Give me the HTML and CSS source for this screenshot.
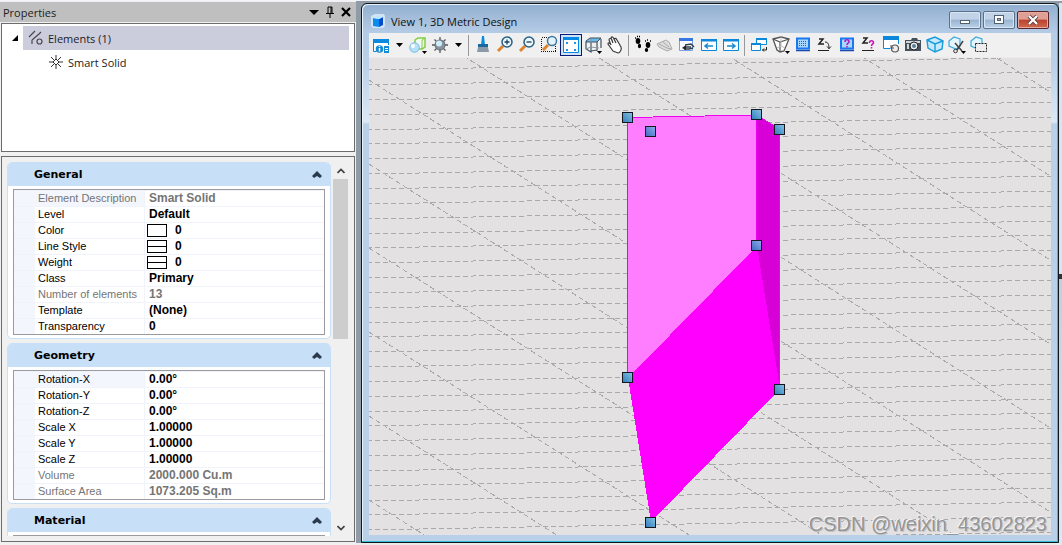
FILE: index.html
```html
<!DOCTYPE html>
<html lang="en">
<head>
<meta charset="utf-8">
<title>View 1, 3D Metric Design</title>
<link rel="stylesheet" href="styles.css">
</head>
<body>
<div class="app">
<aside class="panel">
  <header class="panel-head">
    <h1>Properties</h1>
    <button class="head-btn" aria-label="Options"><svg width="10" height="10" viewBox="0 0 10 10"><path d="M0 3h10L5 8z"/></svg></button>
    <button class="head-btn" aria-label="Pin"><svg width="8" height="12" viewBox="0 0 8 12"><path d="M2 7V1h4v6M5 1v6M0 7.500h8M4 8v4" fill="none" stroke="#000"/></svg></button>
    <button class="head-btn" aria-label="Close"><svg width="10" height="10" viewBox="0 0 10 10"><path d="M1 1l8 8M9 1L1 9" stroke="#000" stroke-width="2.200"/></svg></button>
  </header>
  <div class="tree">
    <div class="tree-row">
      <button class="twisty" aria-label="Collapse"><svg width="7" height="7" viewBox="0 0 7 7"><path d="M6 0v6H0z"/></svg></button>
      <div class="tree-item selected">
        <svg width="16" height="16" viewBox="0 0 16 16" fill="none" stroke="#484850" stroke-width="1.200"><path d="M1 7l6-6M4 14v-4M4 10l7-6M13 2l-2 2"/><circle cx="11.500" cy="11.500" r="2.500"/></svg>
        <span>Elements (1)</span>
      </div>
    </div>
    <div class="tree-row child">
      <svg width="16" height="16" viewBox="0 0 16 16" fill="none" stroke="#333"><path d="M8 5l3 3-3 3-3-3zM8 1v4M8 11v4M1 8h4M11 8h4M3 3l3 3M13 3l-3 3M3 13l3-3M13 13l-3-3"/></svg>
      <span>Smart Solid</span>
    </div>
  </div>
  <div class="props">
    <div class="cards">
      <section class="card">
        <button class="card-head"><span>General</span><svg width="12" height="8" viewBox="0 0 12 8"><path d="M1 5l5-5 5 5-2 2-3-2-3 2z" fill="#2b3a4c"/></svg></button>
        <div class="card-body">
          <table class="grid">
            <tr class="dim first"><th scope="row">Element Description</th><td>Smart Solid</td></tr>
            <tr><th scope="row">Level</th><td>Default</td></tr>
            <tr><th scope="row">Color</th><td><i class="swatch"></i>0</td></tr>
            <tr><th scope="row">Line Style</th><td><i class="swatch line"></i>0</td></tr>
            <tr><th scope="row">Weight</th><td><i class="swatch line"></i>0</td></tr>
            <tr><th scope="row">Class</th><td>Primary</td></tr>
            <tr class="dim"><th scope="row">Number of elements</th><td>13</td></tr>
            <tr><th scope="row">Template</th><td>(None)</td></tr>
            <tr><th scope="row">Transparency</th><td>0</td></tr>
          </table>
        </div>
      </section>
      <section class="card">
        <button class="card-head"><span>Geometry</span><svg width="12" height="8" viewBox="0 0 12 8"><path d="M1 5l5-5 5 5-2 2-3-2-3 2z" fill="#2b3a4c"/></svg></button>
        <div class="card-body">
          <table class="grid">
            <tr class="first"><th scope="row">Rotation-X</th><td>0.00°</td></tr>
            <tr><th scope="row">Rotation-Y</th><td>0.00°</td></tr>
            <tr><th scope="row">Rotation-Z</th><td>0.00°</td></tr>
            <tr><th scope="row">Scale X</th><td>1.00000</td></tr>
            <tr><th scope="row">Scale Y</th><td>1.00000</td></tr>
            <tr><th scope="row">Scale Z</th><td>1.00000</td></tr>
            <tr class="dim"><th scope="row">Volume</th><td>2000.000 Cu.m</td></tr>
            <tr class="dim"><th scope="row">Surface Area</th><td>1073.205 Sq.m</td></tr>
          </table>
        </div>
      </section>
      <section class="card">
        <button class="card-head"><span>Material</span><svg width="12" height="8" viewBox="0 0 12 8"><path d="M1 5l5-5 5 5-2 2-3-2-3 2z" fill="#2b3a4c"/></svg></button>
        <div class="card-body"><div class="grid empty"></div></div>
      </section>
    </div>
    <div class="scroll">
      <button aria-label="Scroll up"><svg width="8" height="6" viewBox="0 0 8 6"><path d="M0.500 5L4 1.500 7.500 5" fill="none" stroke="#404040" stroke-width="1.700"/></svg></button>
      <div class="track"><div class="thumb"></div></div>
      <button aria-label="Scroll down"><svg width="8" height="6" viewBox="0 0 8 6"><path d="M0.500 1L4 4.500 7.500 1" fill="none" stroke="#404040" stroke-width="1.700"/></svg></button>
    </div>
  </div>
</aside>

<main class="window">
  <header class="title">
    <svg width="16" height="16" viewBox="0 0 16 16"><path d="M1 3l4-2h9l1 2v10l-2 2H3l-2-2z" fill="#dceefb" opacity=".8"/><path d="M3 5l6 1v8l-6-1z" fill="#078cf0"/><path d="M9 6l4-2v8l-4 2z" fill="#044bc8"/><path d="M3 5l4-2 6 1-4 2z" fill="#bfe5ff"/></svg>
    <h2>View 1, 3D Metric Design</h2>
    <div class="win-btns">
      <button aria-label="Minimize"><svg width="12" height="10" viewBox="0 0 12 10"><rect x="1.500" y="5.500" width="9" height="3" fill="#fff" stroke="#52606f"/></svg></button>
      <button aria-label="Maximize"><svg width="12" height="10" viewBox="0 0 12 10"><rect x="1.500" y=".5" width="9" height="8" fill="#fff" stroke="#52606f"/><rect x="4.500" y="3.500" width="3" height="2" fill="#9db7d4" stroke="#52606f"/></svg></button>
      <button class="close" aria-label="Close view"><svg width="12" height="10" viewBox="0 0 12 10"><path d="M2 1l8 8M10 1L2 9" stroke="#5d4248" stroke-width="4"/><path d="M2 1l8 8M10 1L2 9" stroke="#fff" stroke-width="2.200"/></svg></button>
    </div>
  </header>
  <nav class="tools" aria-label="View tools">
    <button aria-label="View attributes"><svg viewBox="0 0 22 22"><path d="M3 5h16v13H3z" fill="#fff"/><path d="M3.500 8v9.500h3M18.500 8v3" fill="none" stroke="#0a84d8"/><path d="M3 5h16v4H3z" fill="#0a8ae0"/><circle cx="9.500" cy="15" r="3.800" fill="#128ad8"/><path d="M9.500 14v3.500M9.500 12v1" stroke="#fff" stroke-width="1.500"/><path d="M14 12h5v7h-5z" fill="#128ad8"/><path d="M15 14.500h3M15 16.500h3" stroke="#fff"/></svg></button>
    <button class="caret" aria-label="View attributes list"><svg viewBox="0 0 15 22"><path d="M4 9h7l-3.500 4z"/></svg></button>
    <button aria-label="Display style"><svg viewBox="0 0 22 22"><path d="M8 6l3-2h7v9l-3 2H8z" fill="#f3faf0" stroke="#82cd43" stroke-width="1.500"/><path d="M15 15V6l3-2" fill="none" stroke="#82cd43"/><circle cx="7.500" cy="13.500" r="4.800" fill="#b4e0fa" stroke="#77c0e6"/><circle cx="6" cy="12" r="2" fill="#fff"/><path d="M15 17h5l-2.500 3z"/></svg></button>
    <button aria-label="Adjust brightness"><svg viewBox="0 0 22 22"><path d="M11 3v16M3 11h16M5.500 5.500l11 11M16.500 5.500l-11 11" stroke="#555" stroke-width="1.300"/><circle cx="11" cy="11" r="5" fill="#8a949e" stroke="#606a74"/><circle cx="10" cy="9.500" r="3" fill="#cceefa"/></svg></button>
    <button class="caret" aria-label="Brightness list"><svg viewBox="0 0 15 22"><path d="M4 9h7l-3.500 4z"/></svg></button>
    <i class="sep"></i>
    <button aria-label="Update view"><svg viewBox="0 0 22 22"><path d="M10 2h2l1 9H9z" fill="#078ee2"/><path d="M6 10h10v3H6z" fill="#1768a0"/><path d="M6 13h10l1 5H5z" fill="#8b9aa8"/></svg></button>
    <button aria-label="Zoom in"><svg viewBox="0 0 22 22"><path d="M9 12l-5 5" stroke="#df842d" stroke-width="3"/><circle cx="13" cy="8" r="5" fill="#edf7fc" stroke="#285f85" stroke-width="1.500"/><path d="M10.500 8h5M13 5.500v5" stroke="#154260" stroke-width="1.300"/></svg></button>
    <button aria-label="Zoom out"><svg viewBox="0 0 22 22"><path d="M9 12l-5 5" stroke="#df842d" stroke-width="3"/><circle cx="13" cy="8" r="5" fill="#edf7fc" stroke="#285f85" stroke-width="1.500"/><path d="M10.500 8h5" stroke="#154260" stroke-width="1.300"/></svg></button>
    <button aria-label="Window area"><svg viewBox="0 0 22 22"><path d="M3.500 3.500h14v14h-14z" fill="none" stroke="#111" stroke-dasharray="1 1" shape-rendering="crispEdges"/><path d="M10 11l-5 5" stroke="#df842d" stroke-width="3"/><circle cx="14" cy="7" r="4.500" fill="#e4f4fc" stroke="#3b789f" stroke-width="1.500"/></svg></button>
    <button class="on" aria-label="Fit view"><svg viewBox="0 0 22 22"><path d="M3.500 3.500h15v15h-15z" fill="#fff" stroke="#078ae5"/><path d="M3 3h16v3H3z" fill="#078ae5"/><path d="M6 9h2M7 8v2M14 9h2M15 8v2M6 16h2M7 15v2M14 16h2M15 15v2" fill="none" stroke="#1388d8" stroke-width="1.300"/></svg></button>
    <button aria-label="Rotate view"><svg viewBox="0 0 22 22"><path d="M4 7l4-3h11l-4 4H4z" fill="#6db9e8" stroke="#41515f"/><path d="M4 8v7l5 3V8M15 8v9M19 5v9M9 17l6-1" fill="none" stroke="#455360" stroke-width="1.200"/><path d="M9 5v8l-5 2M9 13l8 1" fill="none" stroke="#8a959f"/><path d="M15 17h5l-2.500 3z"/></svg></button>
    <button aria-label="Pan view"><svg viewBox="0 0 22 22"><path d="M9 17l-5-7c0-2 2-1 3 1L5 6c0-2 2-2 3 0l1 3-2-5c1-2 2-1 3 1l2 4-2-4c1-1 2-1 3 1l4 7c1 2-1 6-3 6z" fill="#fff" stroke="#3c3c3c" stroke-width="1.200"/></svg></button>
    <i class="sep"></i>
    <button aria-label="Walk"><svg viewBox="0 0 22 22"><ellipse cx="6" cy="7" rx="2.300" ry="3"/><ellipse cx="7.500" cy="12" rx="1.600" ry="2.200"/><ellipse cx="16" cy="11" rx="2.300" ry="3"/><ellipse cx="14.500" cy="16" rx="1.700" ry="2"/><path d="M3 4h1M5 2.500h1M7 2.500h1M13 7h1M15 6h1M18 7h1" stroke="#000" stroke-width="1.300"/></svg></button>
    <button aria-label="Fly"><svg viewBox="0 0 22 22"><path d="M3 10l9-4 3 2 3 7-5 2-8-4z" fill="#ddd" stroke="#aaa"/><path d="M5 10l8 4 4 1M9 8l6 5" fill="none" stroke="#aaa"/></svg></button>
    <button aria-label="Navigate view"><svg viewBox="0 0 22 22"><path d="M3.500 5v11.500h13V5" fill="#f8fbff" stroke="#7aa0e0"/><path d="M3 4h14v3H3z" fill="#3978e0"/><path d="M9 11l6-1 3 3M8 15h5l4-1M10 13h5" fill="none" stroke="#33404c" stroke-width="1.500"/><path d="M6 14l4-3v5z" fill="#222"/></svg></button>
    <button aria-label="View previous"><svg viewBox="0 0 22 22"><path d="M3.500 5.500h15v11h-15z" fill="#fff" stroke="#0b87dc"/><path d="M3 5h16v2.500H3z" fill="#0b87dc"/><path d="M15 12H7M10 9.500L7 12l3 2.500" fill="none" stroke="#1588ce" stroke-width="1.500"/></svg></button>
    <button aria-label="View next"><svg viewBox="0 0 22 22"><path d="M3.500 5.500h15v11h-15z" fill="#fff" stroke="#0b87dc"/><path d="M3 5h16v2.500H3z" fill="#0b87dc"/><path d="M7 12h8M12 9.500l3 2.500-3 2.500" fill="none" stroke="#1588ce" stroke-width="1.500"/></svg></button>
    <i class="sep"></i>
    <button aria-label="Copy view"><svg viewBox="0 0 22 22"><path d="M8.500 4.500h10v6h-10z" fill="#fff" stroke="#0b87dc"/><path d="M8 4h11v2H8z" fill="#0b87dc"/><path d="M3.500 9.500h9v7h-9z" fill="#fff" stroke="#0b87dc"/><path d="M3 9h10v2H3z" fill="#0b87dc"/><path d="M18.500 13v3h-4M16 14.500L14.500 16l1.500 1.500" fill="none" stroke="#222"/></svg></button>
    <button aria-label="Perspective"><svg viewBox="0 0 22 22"><path d="M3 5l8-2 8 2-5 12-4 1-3-2z" fill="#fff" stroke="#555" stroke-width="1.300"/><path d="M3 5l7 3 9-3M10 8v10" fill="none" stroke="#555" stroke-width="1.200"/><path d="M7 14l4-2 4 2M11 3v9" fill="none" stroke="#bbb"/><path d="M15 17h5l-2.500 3z"/></svg></button>
    <button aria-label="Set display depth"><svg viewBox="0 0 22 22"><path d="M5 4.500h12v10H5z" fill="#a9d8ff" stroke="#1a78f0" stroke-width="2"/><path d="M4 16.500h14" stroke="#1749b0" stroke-width="1.500"/><path d="M7 7.500h8M7 9.500h8M7 11.500h8" stroke="#2b5acb" stroke-dasharray="1 1" shape-rendering="crispEdges"/></svg></button>
    <button aria-label="Set active depth"><svg viewBox="0 0 22 22"><path d="M5 5h4L5 10h5" fill="none" stroke="#222" stroke-width="1.500"/><path d="M11 8c3 0 4 2 4 7M13 12.500l2 2 2-2M4 16.500h11" fill="none" stroke="#222"/></svg></button>
    <button aria-label="Show display depth"><svg viewBox="0 0 22 22"><path d="M5 4.500h12v10H5z" fill="#a9d8ff" stroke="#1a78f0" stroke-width="2"/><path d="M4 16.500h14" stroke="#1749b0" stroke-width="1.500"/><path d="M9 8c0-3 4-3 4 0 0 1-2 1-2 3M11 12v1.500" fill="none" stroke="#b41ac4" stroke-width="1.600"/></svg></button>
    <button aria-label="Show active depth"><svg viewBox="0 0 22 22"><path d="M5 4h4L5 9h5" fill="none" stroke="#222" stroke-width="1.500"/><path d="M11.500 9c0-3 4-3 4 0 0 1-2 1-2 3M13.500 13v1.500" fill="none" stroke="#c41ab4" stroke-width="1.600"/><path d="M4 16.500h12" stroke="#222"/></svg></button>
    <button aria-label="Change view"><svg viewBox="0 0 22 22"><path d="M3 3h16v12H3z" fill="#fff"/><path d="M3.500 3v11.500h7M18.500 4v6" fill="none" stroke="#0b87dc"/><path d="M3 2h16v4H3z" fill="#0b87dc"/><circle cx="15" cy="14.500" r="3.500" fill="#eee" stroke="#555" stroke-width="1.200"/><path d="M11 11v3h3" fill="none" stroke="#555"/></svg></button>
    <button aria-label="Camera"><svg viewBox="0 0 22 22"><path d="M3 6h6l1-2h5l1 2h3v11H3z" fill="#46515b"/><path d="M4 7h14v2H4z" fill="#cfd5d9"/><circle cx="12" cy="12" r="4" fill="#e7edf1" stroke="#222"/><circle cx="12" cy="12" r="2" fill="#5a7d96"/><path d="M5 10h2v5H5z" fill="#cfd5d9"/></svg></button>
    <button aria-label="Clip volume"><svg viewBox="0 0 22 22"><path d="M3 6l8-3 8 4-1 8-7 3-7-4z" fill="#c6eafc" stroke="#199bdc" stroke-width="1.400"/><path d="M3 6l8 4 8-3M11 10v8" fill="none" stroke="#199bdc" stroke-width="1.400"/></svg></button>
    <button aria-label="Clip tools"><svg viewBox="0 0 22 22"><path d="M3 7l5-4 6 2v7l-4 3-7-3z" fill="#e3f5fd" stroke="#3da9de" stroke-width="1.200"/><path d="M17 7l-6 9M9 9l7 8" stroke="#444" stroke-width="1.500"/><circle cx="9.500" cy="17" r="1.800" fill="none" stroke="#333"/><path d="M15 17h5l-2.500 3z"/></svg></button>
    <button aria-label="Clip mask"><svg viewBox="0 0 22 22"><path d="M3 7l5-4 6 2v7l-4 3-7-3z" fill="#e3f5fd" stroke="#3da9de" stroke-width="1.200"/><path d="M7.500 9.500h11v8h-11z" fill="#eee" stroke="#222" stroke-dasharray="2 1"/></svg></button>
  </nav>
  <div class="view">
    <svg class="scene" viewBox="369 58 682 477" preserveAspectRatio="xMidYMid slice" role="img" aria-label="Solid model on a construction grid">
      <defs>
        <linearGradient id="knob" x1="0" y1="1" x2="1" y2="0"><stop offset="0" stop-color="#307cbb"/><stop offset="1" stop-color="#86c3e3"/></linearGradient>
        <linearGradient id="knob-in" x1="0" y1="1" x2="1" y2="0"><stop offset="0" stop-color="#3d68bd"/><stop offset="1" stop-color="#8fb0ee"/></linearGradient>
        <g id="handle"><rect x="-5" y="-5" width="10" height="10" fill="url(#knob)" stroke="#151720"/></g>
        <g id="handle-in"><rect x="-5" y="-5" width="10" height="10" fill="url(#knob-in)" stroke="#151720"/></g>
        <path id="row" d="M367 0L1055-13"/>
        <path id="slant" d="M369 0L1055 435"/>
      </defs>
      <g stroke="#aaa9aa" stroke-dasharray="5 3" shape-rendering="crispEdges" fill="none">
        <use href="#row" y="70"/><use href="#row" y="85"/><use href="#row" y="100"/><use href="#row" y="115"/><use href="#row" y="130"/><use href="#row" y="144"/><use href="#row" y="159"/><use href="#row" y="174"/><use href="#row" y="189"/><use href="#row" y="204"/><use href="#row" y="219"/><use href="#row" y="234"/><use href="#row" y="248"/><use href="#row" y="263"/><use href="#row" y="278"/><use href="#row" y="293"/><use href="#row" y="308"/><use href="#row" y="323"/><use href="#row" y="337"/><use href="#row" y="352"/><use href="#row" y="367"/><use href="#row" y="382"/><use href="#row" y="397"/><use href="#row" y="412"/><use href="#row" y="426"/><use href="#row" y="441"/><use href="#row" y="456"/><use href="#row" y="471"/><use href="#row" y="486"/><use href="#row" y="501"/><use href="#row" y="515"/><use href="#row" y="530"/><use href="#row" y="545"/>
        <use href="#slant" y="-340"/><use href="#slant" y="-256"/><use href="#slant" y="-172"/><use href="#slant" y="-88"/><use href="#slant" y="-4"/><use href="#slant" y="80"/><use href="#slant" y="164"/><use href="#slant" y="248"/><use href="#slant" y="332"/><use href="#slant" y="416"/><use href="#slant" y="500"/>
      </g>
      <g shape-rendering="crispEdges">
        <path d="M627 117L757 115V246L628 378z" fill="#ff7dff"/>
        <path d="M756 115L780 129V389L757 246z" fill="#d700d7"/>
        <path d="M757 246L780 389 651 522 628 378z" fill="#f0f"/>
        <path d="M627.500 378V117.500L756.500 115V246M756 115l23.500 14V389" fill="none" stroke="#f000f0"/>
      </g>
      <use href="#handle" x="627.500" y="117.500"/><use href="#handle-in" x="650.500" y="131.500"/><use href="#handle" x="756.500" y="114.500"/><use href="#handle" x="779.500" y="129.500"/><use href="#handle-in" x="756.500" y="245.500"/><use href="#handle" x="627.500" y="377.500"/><use href="#handle" x="779.500" y="389.500"/><use href="#handle" x="650.500" y="522.500"/>
    </svg>
    <p class="credit">CSDN @weixin_43602823</p>
  </div>
</main>
<div class="edge"></div>
</div>
</body>
</html>
```
FILE: styles.css
```css
* { box-sizing: border-box; }
body { margin: 0; font-family: "Open Sans", sans-serif; font-size: 11px; color: #1c1c1c; background: #f0f0f0; }
button { display: flex; align-items: center; justify-content: center; padding: 0; border: 0; background: none; font: inherit; color: inherit; }
h1, h2 { margin: 0; font-size: 11px; font-weight: 400; }
.app { display: flex; height: 100vh; overflow: hidden; background: linear-gradient(#f2f4fa 1px, #8f9ba7 1px, #8f9ba7 calc(100% - 2px), #ececec calc(100% - 2px)); }

.panel { display: flex; flex-direction: column; flex: none; width: 356px; padding: 1px 1px 3px; border-top: 1px solid #f2f4fa; background: #f0f0f0; }
.panel-head { display: flex; align-items: center; gap: 4px; height: 20px; margin: 0 -1px 1px; padding: 0 4px 0 3px; background: #bfbfbf; }
.panel-head h1 { flex: 1; }
.head-btn { width: 12px; height: 16px; }
.tree { height: 129px; padding: 2px 5px; border: 1px solid #6c6c6c; background: #fff; }
.tree-row { display: flex; align-items: center; height: 24px; }
.twisty { width: 16px; }
.tree-item { display: flex; flex: 1; align-items: center; gap: 4px; height: 24px; padding-left: 5px; }
.selected { background: #cccddc; }
.child { gap: 4px; padding-left: 41px; }
.props { display: flex; flex: 1; gap: 2px; min-height: 0; margin-top: 4px; padding: 5px 6px 5px 5px; border: 1px solid #6c6c6c; }

.cards { display: flex; flex: 1; flex-direction: column; gap: 4px; overflow: hidden; }
.card { flex: none; border: 1px solid #c8dff8; border-radius: 5px; background: #fff; }
.card-head { width: 100%; height: 23px; padding: 0 7px 0 26px; justify-content: space-between; border-radius: 4px 4px 0 0; background: #c8dff8; color: #000; font: bold 11px "DejaVu Sans", sans-serif; }
.card-body { padding: 3px 5px; border-radius: 4px; }
.grid { width: 100%; border: 1px solid #9b9b9f; border-spacing: 0; border-collapse: separate; table-layout: fixed; color: #000; font: 12px/15px "Liberation Sans", Arial, sans-serif; background: linear-gradient(90deg, #f3f6fc 21px, #fff 21px); }
.grid th, .grid td { height: 16px; padding: 0 0 0 4px; border-top: 1px solid #f1f3fb; text-align: left; white-space: nowrap; }
.grid th { width: 131px; padding-left: 24px; border-right: 1px solid #f1f3fb; font-size: 11px; font-weight: 400; }
.grid td { font-weight: 700; }
.grid .dim { color: #757575; }
.first th { background: #f3f6fc; }
.swatch { display: inline-block; width: 20px; height: 13px; margin: 1px 8px 0 -2px; border: 1px solid #000; background: #fff; vertical-align: top; }
.swatch.line { background: linear-gradient(#000, #000) 0 5px / 100% 1px no-repeat #fff; }
.empty { height: 60px; }

.scroll { display: flex; flex-direction: column; width: 15px; }
.scroll button { height: 17px; }
.track { flex: 1; }
.thumb { height: 47%; background: #cdcdcd; }

.window { display: flex; flex: 1; flex-direction: column; min-width: 0; margin: 3px 0 2px 5px; padding: 0 7px 7px; border: 1px solid #10151a; border-radius: 6px 6px 0 0; background: linear-gradient(#92afd0 0, #b5cce6 29px, #b9d0e9 60px, #dce8f6 118px, #b9d0e9 120px); box-shadow: inset -1px -1px #35bfd4, inset 1px 1px #e8f3fb; }
.title { display: flex; align-items: center; gap: 5px; height: 29px; padding: 5px 2px 0 1px; color: #111; }
.title h2 { flex: 1; }
.win-btns { display: flex; gap: 2px; padding-bottom: 2px; }
.win-btns button { width: 32px; height: 18px; border: 1px solid #5b7189; border-radius: 2px; background: linear-gradient(#c2d3e8 45%, #98b3d1 50%, #bdd2e9); box-shadow: inset 0 0 0 1px #d8e6f4; }
.win-btns .close { border-color: #58262b; background: linear-gradient(#df9f95 45%, #bd412d 50%, #cd6b4d); box-shadow: inset 0 0 0 1px #e6aaa0; }

.tools { display: flex; flex: none; align-items: center; height: 24px; padding-left: 1px; overflow: hidden; background: #f0f0f0; }
.tools button { flex: none; width: 22px; height: 22px; }
.tools svg { width: 22px; height: 22px; overflow: visible; }
.tools .caret, .tools .caret svg { width: 15px; }
.tools .on { background: #cfe4f8; outline: 1px solid #071c78; outline-offset: -1px; }
.sep { flex: none; width: 4px; height: 21px; margin-left: 2px; border-left: 1px solid #999; }

.view { position: relative; flex: 1; min-height: 0; border-top: 1px solid #ececec; background: #e3e1e2; overflow: hidden; }
.scene { display: block; width: 100%; height: 100%; }
.credit { position: absolute; right: 4px; bottom: 0; margin: 0; color: #969596; font: 20px/22px "Liberation Sans", Arial, sans-serif; text-shadow: -1px -1px #f4f4f4, 1px 1px #c4c3c4; }
.edge { flex: none; width: 3px; margin-top: 3px; background: linear-gradient(#d6e4f3 50%, #333 50%, #333 51%, #c2cedb 51%, #dce8f6); }
```
